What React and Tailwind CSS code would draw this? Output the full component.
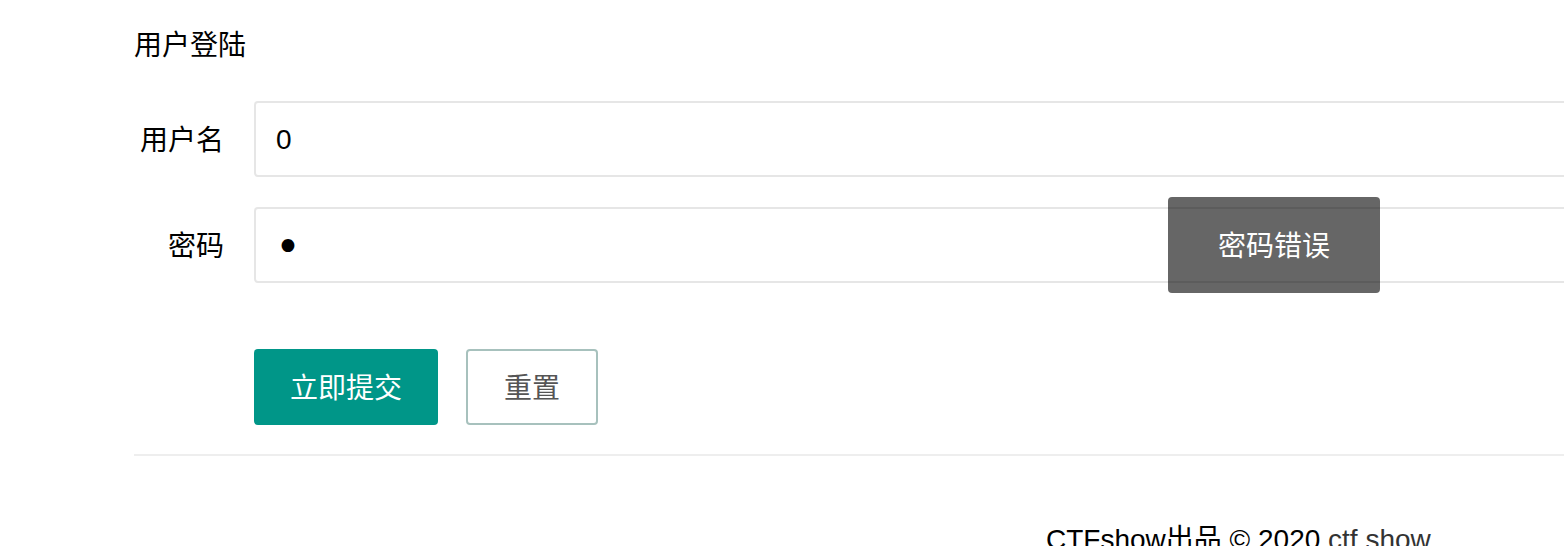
// App.jsx - login form (layui style, zoomed 2x)
export default function App() {
  return (
    <div className="relative w-[1564px] h-[546px] overflow-hidden bg-white text-black font-['Liberation_Sans','Noto_Sans_CJK_SC',sans-serif]">
      <div className="pl-[134px]">
        <h2 className="mt-[26px] text-[28px] leading-[40px] font-normal">用户登陆</h2>

        <form className="mt-[35px] w-[1600px]" onSubmit={(e) => e.preventDefault()}>
          <div className="flex items-center h-[76px]">
            <label className="w-[120px] pr-[30px] pt-[4px] text-right text-[28px]">用户名</label>
            <input
              type="text"
              defaultValue="0"
              className="flex-1 h-[76px] border-2 border-[#e6e6e6] rounded-[4px] pl-[20px] pt-[2px] text-[28px] outline-none"
            />
          </div>
          <div className="flex items-center h-[76px] mt-[30px]">
            <label className="w-[120px] pr-[30px] pt-[4px] text-right text-[28px]">密码</label>
            <input
              type="password"
              defaultValue="a"
              className="flex-1 h-[76px] border-2 border-[#e6e6e6] rounded-[4px] pl-[19px] pt-[2px] text-[44px] font-['DejaVu_Sans',sans-serif] outline-none"
            />
          </div>
          <div className="flex gap-[28px] mt-[66px] pl-[120px]">
            <button type="submit" className="h-[76px] px-[36px] pt-[4px] rounded-[4px] bg-[#009688] text-white text-[28px]">
              立即提交
            </button>
            <button type="reset" className="h-[76px] px-[36px] pt-[4px] rounded-[4px] border-2 border-[#a7c1bd] bg-white text-[#555] text-[28px]">
              重置
            </button>
          </div>
        </form>

        <hr className="mt-[29px] border-0 border-t-2 border-[#eeeeee]" />
      </div>

      <footer className="mt-[64px] pl-[1046px] text-[28px] leading-[40px] whitespace-nowrap">
        CTFshow出品 © 2020 <a className="text-[#333]" href="#">ctf.show</a>
      </footer>

      <div className="absolute left-[1168px] top-[197px] w-[212px] h-[96px] pt-[4px] rounded-[4px] bg-black/60 text-white text-[28px] leading-[92px] text-center">
        密码错误
      </div>
    </div>
  );
}
